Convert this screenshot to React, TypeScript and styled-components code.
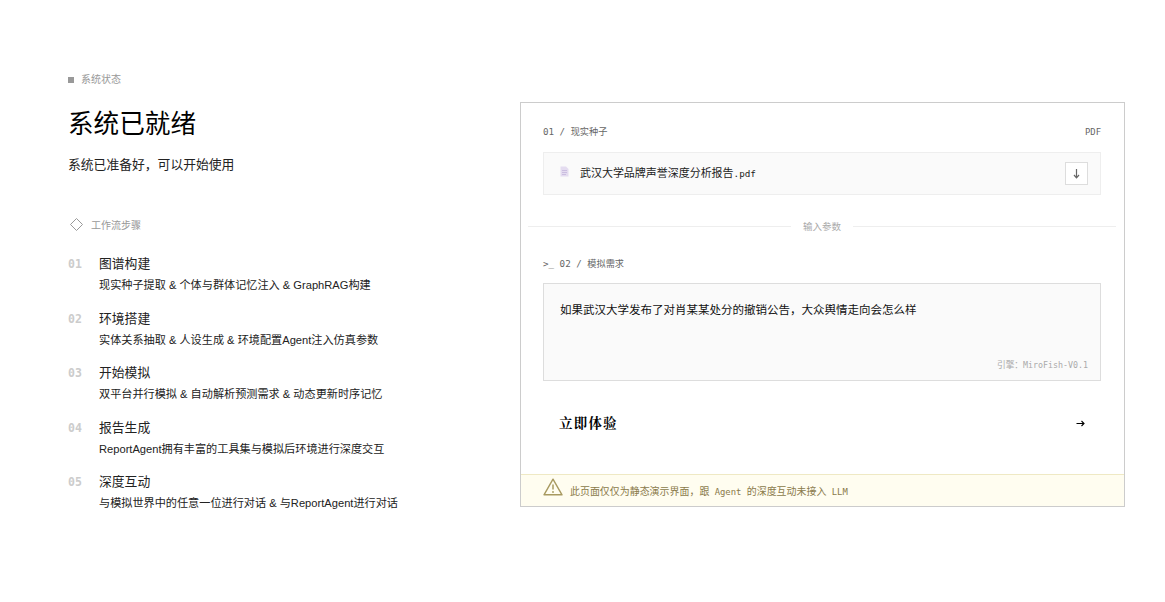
import React from 'react';
import styled, { createGlobalStyle } from 'styled-components';

const SANS = '"Liberation Sans", "Noto Sans CJK SC", sans-serif';
const MONO = '"DejaVu Sans Mono", "Noto Sans CJK SC", monospace';

const GlobalStyle = createGlobalStyle`
  html, body { margin: 0; padding: 0; background: #fff; }
  * { box-sizing: border-box; }
`;

const Page = styled.div`
  width: 1165px;
  height: 602px;
  display: flex;
  align-items: flex-start;
  justify-content: space-between;
  padding: 73px 40px 0 68px;
  font-family: ${SANS};
  color: #000;
`;

const LeftColumn = styled.div`
  width: 420px;
  display: flex;
  flex-direction: column;
`;

const StatusLine = styled.div`
  display: flex;
  align-items: center;
  gap: 7px;
  height: 13px;
  font-size: 10px;
  line-height: 13px;
  color: #999;
`;

const StatusDot = styled.span`
  width: 6px;
  height: 6px;
  background: #999;
`;

const Title = styled.h1`
  margin: 20px 0 0;
  font-size: 25.6px;
  line-height: 36px;
  font-weight: 400;
  color: #000;
`;

const Subtitle = styled.p`
  margin: 14px 0 0;
  font-size: 12.8px;
  line-height: 18px;
  color: #222;
`;

const StepsHeader = styled.div`
  display: flex;
  align-items: center;
  gap: 8px;
  margin-top: 41px;
  padding-left: 2px;
  height: 18px;
  font-size: 10px;
  color: #999;
`;

const StepList = styled.ol`
  list-style: none;
  margin: 21px 0 0;
  padding: 0;
  display: flex;
  flex-direction: column;
  gap: 17px;
`;

const StepItem = styled.li`
  display: flex;
  height: 37.6px;
`;

const StepNumber = styled.span`
  width: 31px;
  font-family: ${MONO};
  font-size: 11.5px;
  line-height: 21px;
  font-weight: 700;
  color: #ccc;
`;

const StepBody = styled.div`
  display: flex;
  flex-direction: column;
`;

const StepTitle = styled.div`
  font-size: 12.8px;
  line-height: 19px;
  color: #222;
`;

const StepDesc = styled.div`
  margin-top: 3px;
  font-size: 11.15px;
  line-height: 18px;
  white-space: nowrap;
  color: #222;
`;

const Panel = styled.section`
  width: 605px;
  height: 405px;
  margin-top: 29px;
  border: 1px solid #ccc;
  display: flex;
  flex-direction: column;
`;

const PanelBody = styled.div`
  flex: 1;
  display: flex;
  flex-direction: column;
  padding: 22px 23px 0 22px;
`;

const LabelRow = styled.div`
  display: flex;
  align-items: center;
  justify-content: space-between;
  height: 14px;
  font-family: ${MONO};
  font-size: 9.2px;
  line-height: 14px;
  color: #666;
`;

const PdfTag = styled.span`
  font-size: 8.9px;
`;

const FileBox = styled.div`
  display: flex;
  align-items: center;
  height: 43px;
  margin-top: 13px;
  padding: 0 12px 0 16px;
  background: #fafafa;
  border: 1px solid #eee;
`;

const FileLabel = styled.div`
  display: flex;
  align-items: center;
  gap: 11px;
  margin-bottom: 4px;
`;

const FileName = styled.span`
  font-family: ${MONO};
  font-size: 9.3px;
  color: #222;
`;

// CJK runs sit at about twice the width of the mono latin
const Han = styled.span<{ $scale?: number }>`
  font-size: ${(props) => props.$scale ?? 1.18}em;
`;

const DownloadButton = styled.button`
  margin-left: auto;
  width: 23px;
  height: 23px;
  padding: 0;
  display: flex;
  align-items: center;
  justify-content: center;
  background: #fff;
  border: 1px solid #ddd;
`;

const DividerRow = styled.div`
  display: flex;
  align-items: center;
  gap: 12px;
  margin: 23px -15px 0;
  height: 16px;
  font-family: ${MONO};
  font-size: 9.5px;
  color: #aaa;

  &::before, &::after {
    content: '';
    flex: 1;
    height: 1px;
    background: #eee;
  }
`;

const PromptLabel = styled(LabelRow)`
  margin-top: 23px;
  justify-content: flex-start;
  white-space: pre;
`;

const PromptBox = styled.div`
  position: relative;
  height: 98px;
  margin-top: 12px;
  padding: 17px 16px;
  background: #fafafa;
  border: 1px solid #ddd;
  font-size: 11.5px;
  line-height: 18px;
  color: #111;
`;

const EngineTag = styled.span`
  position: absolute;
  right: 12px;
  bottom: 9px;
  font-family: ${MONO};
  font-size: 8.3px;
  line-height: 12px;
  color: #aaa;
`;

const StartButton = styled.button`
  display: flex;
  align-items: center;
  justify-content: space-between;
  height: 82px;
  padding: 0 16px;
  border: 0;
  background: #fff;
  font-family: "Liberation Serif", "Noto Serif CJK SC", "Noto Sans CJK SC", serif;
  font-size: 13.5px;
  font-weight: 700;
  letter-spacing: 1.2px;
  color: #000;

  svg {
    margin-top: 2px;
  }
`;

const Notice = styled.div`
  display: flex;
  align-items: center;
  gap: 7px;
  height: 32px;
  padding: 0 22px;
  background: #fffdf0;
  border-top: 1px solid #efe9c4;
  font-family: ${MONO};
  font-size: 8.9px;
  color: #8a7a4a;

  svg {
    margin-bottom: 8px;
  }
`;

const steps = [
    { title: '图谱构建', desc: '现实种子提取 & 个体与群体记忆注入 & GraphRAG构建' },
    { title: '环境搭建', desc: '实体关系抽取 & 人设生成 & 环境配置Agent注入仿真参数' },
    { title: '开始模拟', desc: '双平台并行模拟 & 自动解析预测需求 & 动态更新时序记忆' },
    { title: '报告生成', desc: 'ReportAgent拥有丰富的工具集与模拟后环境进行深度交互' },
    { title: '深度互动', desc: '与模拟世界中的任意一位进行对话 & 与ReportAgent进行对话' },
];

const DiamondIcon = () => (
    <svg width="13" height="13" viewBox="0 0 13 13" fill="none">
        <path d="M6.5 0.5 L12.5 6.5 L6.5 12.5 L0.5 6.5 Z" stroke="#999" strokeWidth="1" />
    </svg>
);

const FileIcon = () => (
    <svg width="9" height="11" viewBox="0 0 9 11">
        <path d="M0.5 0.5 H6 L8.5 3 V10.5 H0.5 Z" fill="#e4dcf0" />
        <path d="M2 4.5 H7 M2 6.5 H7 M2 8.5 H6" stroke="#c4b6dc" strokeWidth="0.8" />
    </svg>
);

const DownArrowIcon = () => (
    <svg width="9" height="11" viewBox="0 0 9 11" fill="none">
        <path d="M4.5 1 V9.5 M2 7 L4.5 9.8 L7 7" stroke="#666" strokeWidth="1.2" />
    </svg>
);

const RightArrowIcon = () => (
    <svg width="9" height="7" viewBox="0 0 9 7" fill="none">
        <path d="M0.5 3.5 H8 M5.5 1 L8 3.5 L5.5 6" stroke="#000" strokeWidth="1.1" />
    </svg>
);

const WarningIcon = () => (
    <svg width="20" height="18" viewBox="0 0 20 18" fill="none">
        <path d="M10 1.2 L19 16.8 H1 Z" stroke="#a89a60" strokeWidth="1.4" strokeLinejoin="round" />
        <path d="M10 6.5 V11.5" stroke="#a89a60" strokeWidth="1.5" />
        <circle cx="10" cy="14" r="0.9" fill="#a89a60" />
    </svg>
);

const App: React.FC = () => {
    return (
        <>
            <GlobalStyle />
            <Page>
                <LeftColumn>
                    <StatusLine>
                        <StatusDot />
                        系统状态
                    </StatusLine>
                    <Title>系统已就绪</Title>
                    <Subtitle>{'系统已准备好\uFF0C可以开始使用'}</Subtitle>

                    <StepsHeader>
                        <DiamondIcon />
                        工作流步骤
                    </StepsHeader>
                    <StepList>
                        {steps.map((step, index) => (
                            <StepItem key={step.title}>
                                <StepNumber>{`0${index + 1}`}</StepNumber>
                                <StepBody>
                                    <StepTitle>{step.title}</StepTitle>
                                    <StepDesc>{step.desc}</StepDesc>
                                </StepBody>
                            </StepItem>
                        ))}
                    </StepList>
                </LeftColumn>

                <Panel>
                    <PanelBody>
                        <LabelRow>
                            <span>01 / 现实种子</span>
                            <PdfTag>PDF</PdfTag>
                        </LabelRow>
                        <FileBox>
                            <FileLabel>
                                <FileIcon />
                                <FileName><Han>武汉大学品牌声誉深度分析报告</Han>.pdf</FileName>
                            </FileLabel>
                            <DownloadButton>
                                <DownArrowIcon />
                            </DownloadButton>
                        </FileBox>
                        <DividerRow>输入参数</DividerRow>
                        <PromptLabel>{'>_ 02 / 模拟需求'}</PromptLabel>
                        <PromptBox>
                            {'如果武汉大学发布了对肖某某处分的撤销公告\uFF0C大众舆情走向会怎么样'}
                            <EngineTag><Han $scale={1.05}>{'引擎\uFF1A'}</Han>MiroFish-V0.1</EngineTag>
                        </PromptBox>
                        <StartButton>
                            立即体验
                            <RightArrowIcon />
                        </StartButton>
                    </PanelBody>
                    <Notice>
                        <WarningIcon />
                        <span>
                            <Han $scale={1.12}>{'此页面仅仅为静态演示界面\uFF0C跟'}</Han> Agent <Han $scale={1.12}>的深度互动未接入</Han> LLM
                        </span>
                    </Notice>
                </Panel>
            </Page>
        </>
    );
};

export default App;
